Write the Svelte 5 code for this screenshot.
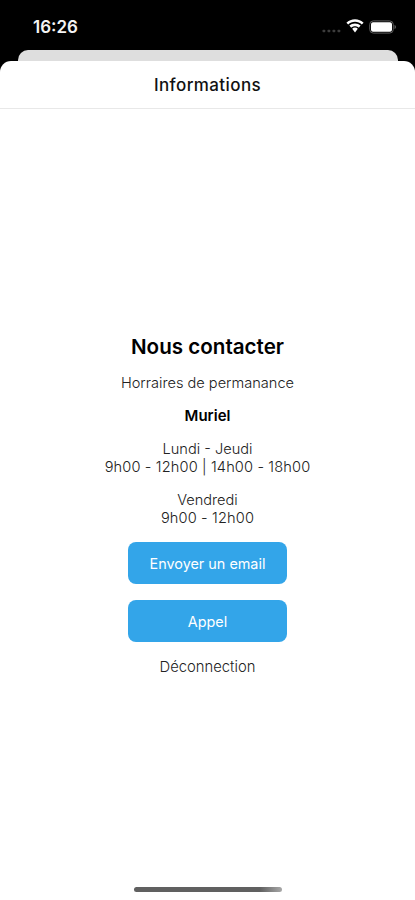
<script lang="ts">
	const time: string = '16:26';

	const schedule: { days: string; hours: string }[] = [
		{ days: 'Lundi - Jeudi', hours: '9h00 - 12h00 | 14h00 - 18h00' },
		{ days: 'Vendredi', hours: '9h00 - 12h00' }
	];
</script>

<div class="screen">
	<div class="status-bar">
		<span class="time">{time}</span>
		<div class="status-icons">
			<svg class="signal" width="19" height="4" viewBox="0 0 19 4">
				<g fill="#3c3c3c">
					<rect x="0.5" y="0.7" width="2.8" height="2.6" rx="0.8" />
					<rect x="5.5" y="0.7" width="2.8" height="2.6" rx="0.8" />
					<rect x="10.5" y="0.7" width="2.8" height="2.6" rx="0.8" />
					<rect x="15.5" y="0.7" width="2.8" height="2.6" rx="0.8" />
				</g>
			</svg>
			<svg class="wifi" width="18" height="14" viewBox="0 0 18 14">
				<path
					d="M9 0.2C12.3 0.2 15.4 1.5 17.6 3.7L15.8 5.6C14 3.8 11.6 2.8 9 2.8S4 3.8 2.2 5.6L0.4 3.7C2.6 1.5 5.7 0.2 9 0.2Z"
					fill="#fff"
				/>
				<path
					d="M9 4.4C11.1 4.4 13.1 5.2 14.6 6.6L12.8 8.7C11.8 7.7 10.4 7.2 9 7.2S6.2 7.7 5.2 8.7L3.4 6.6C4.9 5.2 6.9 4.4 9 4.4Z"
					fill="#fff"
				/>
				<path d="M9 8.6C10.1 8.6 11.1 9 11.8 9.7L9 13.4L6.2 9.7C6.9 9 7.9 8.6 9 8.6Z" fill="#fff" />
			</svg>
			<svg class="battery" width="28" height="14" viewBox="0 0 28 14">
				<rect x="0.7" y="0.9" width="23.6" height="12.2" rx="3.6" fill="none" stroke="#5c5c5c" />
				<rect x="2" y="2.2" width="21" height="9.6" rx="2" fill="#fff" />
				<path d="M25.6 4.8C27.2 5.6 27.2 8.4 25.6 9.2Z" fill="#777" />
			</svg>
		</div>
	</div>

	<div class="back-card"></div>

	<div class="sheet">
		<header class="header">Informations</header>

		<main class="content">
			<h1>Nous contacter</h1>
			<p class="subtitle">Horraires de permanance</p>
			<p class="name">Muriel</p>
			{#each schedule as slot}
				<p class="slot">
					<span class="days">{slot.days}</span><br />
					<span class="hours">{slot.hours}</span>
				</p>
			{/each}
			<button type="button" class="button">Envoyer un email</button>
			<button type="button" class="button">Appel</button>
			<button type="button" class="logout">Déconnection</button>
		</main>

		<div class="home-indicator"></div>
	</div>
</div>

<style>
	:global(body) {
		margin: 0;
		background: #000;
	}

	.screen {
		display: flex;
		flex-direction: column;
		width: 415px;
		height: 900px;
		overflow: hidden;
		background: #000;
		font-family: Inter, 'Liberation Sans', sans-serif;
		color: #222;
	}

	.status-bar {
		display: flex;
		justify-content: space-between;
		box-sizing: border-box;
		height: 50px;
		padding: 17px 18px 0 33px;
	}

	.time {
		font-size: 17px;
		line-height: 21px;
		font-weight: 600;
		color: #f4f4f4;
	}

	.status-icons {
		display: flex;
		align-items: flex-start;
		padding-top: 2px;
	}

	.signal {
		margin: 10px 5px 0 0;
	}

	.wifi {
		margin: 0 5px 0 0;
	}

	.battery {
		margin-top: 1px;
	}

	.back-card {
		flex: none;
		height: 11px;
		margin: 0 17px 0 18px;
		border-radius: 10px 10px 0 0;
		background: #dedede;
	}

	.sheet {
		display: flex;
		flex: 1;
		flex-direction: column;
		align-items: center;
		border-radius: 11px 11px 0 0;
		background: #fff;
	}

	.header {
		box-sizing: border-box;
		width: 100%;
		height: 48px;
		border-bottom: 1px solid #e8e8e8;
		font-size: 17px;
		line-height: 48px;
		font-weight: 500;
		letter-spacing: 0.4px;
		text-align: center;
		color: #111;
	}

	.content {
		display: flex;
		flex: 1;
		flex-direction: column;
		align-items: center;
		padding-top: 225px;
		text-align: center;
		white-space: nowrap;
	}

	h1 {
		margin: 0 0 -1px;
		font-size: 20.6px;
		line-height: 26px;
		font-weight: 600;
		color: #000;
	}

	p {
		margin: 15px 0 0;
		font-size: 14.6px;
		line-height: 18px;
		font-weight: 300;
	}

	.name {
		font-size: 15px;
		font-weight: 600;
		color: #000;
	}

	.hours {
		letter-spacing: 0.13px;
	}

	.button {
		width: 159px;
		height: 42px;
		margin-top: 15px;
		padding: 0;
		border: none;
		border-radius: 8px;
		background: #33a5e9;
		font-family: inherit;
		font-size: 14.4px;
		font-weight: 400;
		color: #fff;
	}

	.button + .button {
		margin-top: 16px;
	}

	.logout {
		margin-top: 16px;
		padding: 0;
		border: none;
		background: none;
		font-family: inherit;
		font-size: 14.8px;
		line-height: 18px;
		font-weight: 300;
		color: #222;
	}

	.home-indicator {
		flex: none;
		width: 148px;
		height: 5px;
		margin-bottom: 8px;
		border-radius: 3px;
		background: linear-gradient(to right, #606060 85%, #a8a8a8);
	}
</style>
